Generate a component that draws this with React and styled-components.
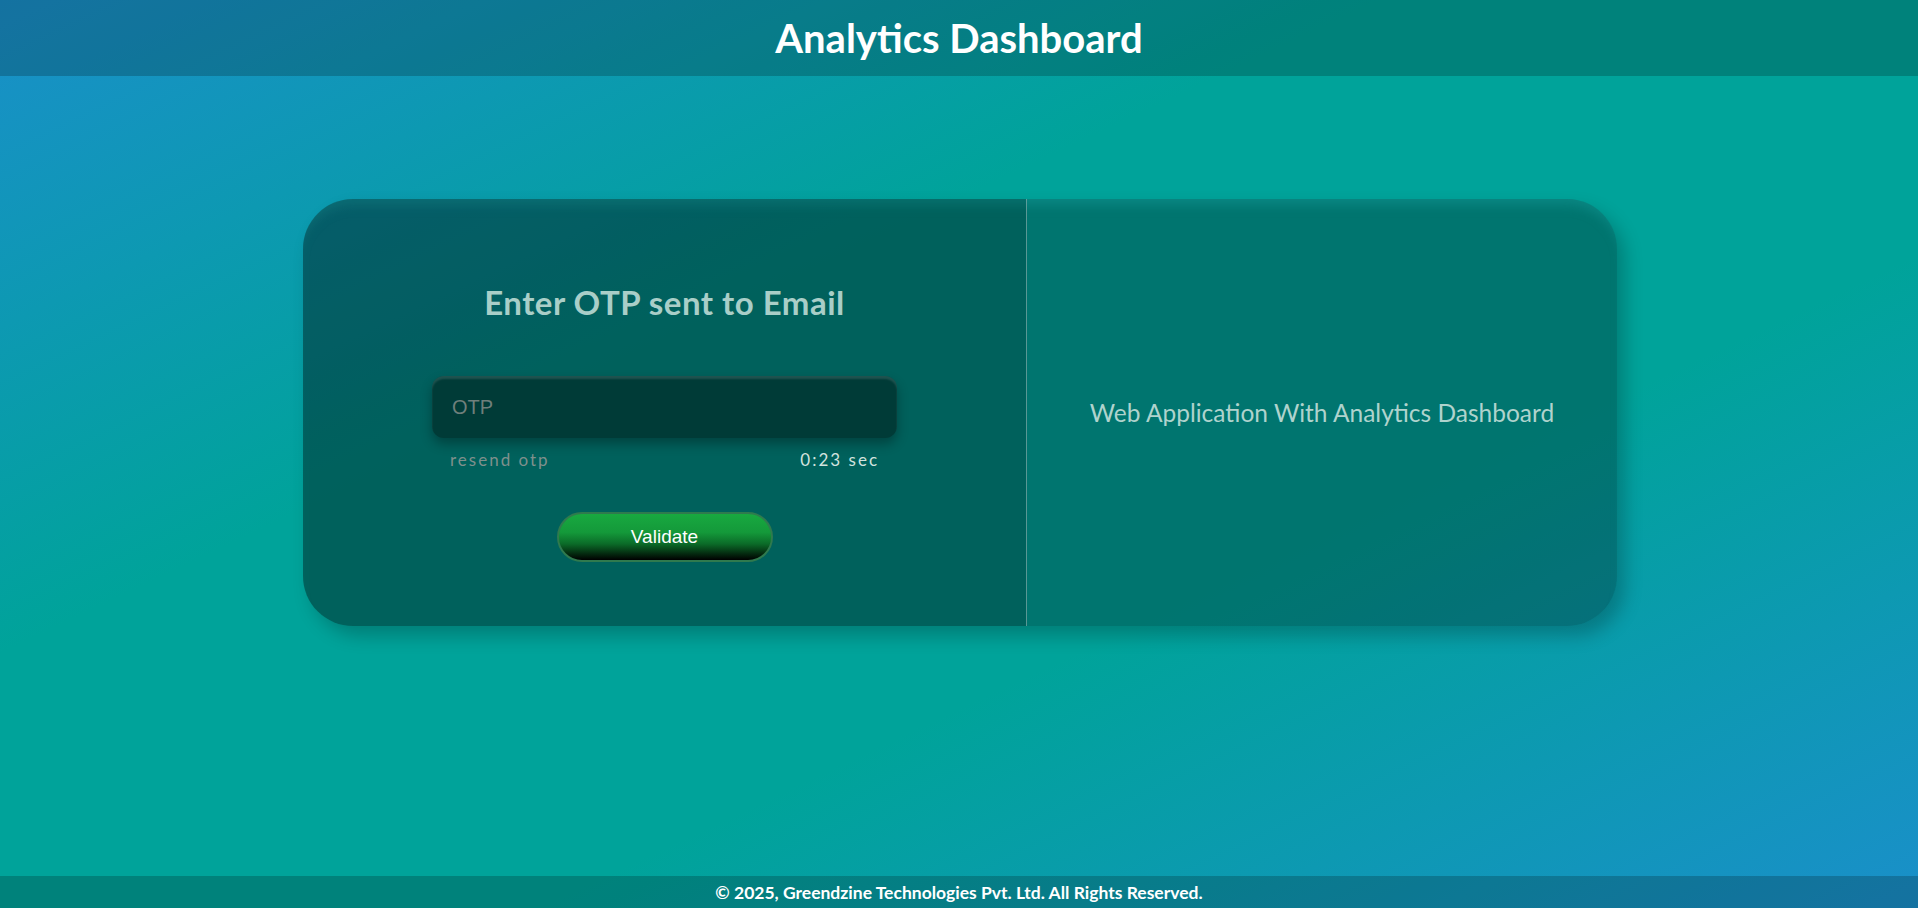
import React from "react";
import styled, { createGlobalStyle } from "styled-components";

const GlobalStyle = createGlobalStyle`
  html, body {
    margin: 0;
    padding: 0;
  }
  body {
    font-family: Lato, "Noto Sans", sans-serif;
  }
  * {
    box-sizing: border-box;
  }
`;

const Page = styled.div`
  display: flex;
  flex-direction: column;
  height: 100vh;
  background: linear-gradient(
    to bottom right,
    #1a8fca 0%,
    #00a39a 36%,
    #00a39a 64%,
    #1a8fca 100%
  );
`;

const Header = styled.header`
  height: 76px;
  display: flex;
  align-items: center;
  justify-content: center;
  background: rgba(0, 0, 0, 0.2);
`;

const Title = styled.h1`
  margin: 0;
  font-size: 40px;
  font-weight: 700;
  color: #ffffff;
`;

const Main = styled.main`
  flex: 1;
  display: flex;
  justify-content: center;
  align-items: flex-start;
  padding-top: 123px;
  padding-left: 2px;
`;

const Card = styled.section`
  width: 1314px;
  height: 427px;
  display: grid;
  grid-template-columns: 724px 1fr;
  border-radius: 50px;
  overflow: hidden;
  background: rgba(0, 0, 0, 0.28);
  box-shadow: 8px 10px 18px rgba(0, 0, 0, 0.22),
    inset 0 12px 12px -6px rgba(30, 170, 170, 0.35);
`;

const FormPane = styled.div`
  display: flex;
  flex-direction: column;
  align-items: center;
  padding-top: 84px;
  background: rgba(0, 0, 0, 0.17);
  border-right: 1px solid rgba(255, 255, 255, 0.35);
`;

const Heading = styled.h2`
  margin: 0;
  font-size: 33px;
  line-height: 38px;
  font-weight: 700;
  letter-spacing: 0.5px;
  color: #a9cec8;
`;

const OtpInput = styled.input`
  margin-top: 55px;
  width: 465px;
  height: 62px;
  padding: 0 20px;
  border: none;
  outline: none;
  border-radius: 12px;
  background: #003b37;
  font-family: "Liberation Sans", Arial, sans-serif;
  font-size: 20px;
  color: #cfe0dc;
  box-shadow: 0 6px 12px rgba(0, 0, 0, 0.3),
    inset 0 3px 2px rgba(255, 255, 255, 0.12);

  &::placeholder {
    color: #6f7f7b;
  }
`;

const MetaRow = styled.div`
  margin-top: 12px;
  width: 465px;
  padding: 0 18px;
  display: flex;
  justify-content: space-between;
  font-size: 17px;
  line-height: 20px;
  letter-spacing: 2px;
`;

const Meta = styled.span`
  color: ${(p) => (p.light ? "#d2e3df" : "#7f908c")};
`;

const ValidateButton = styled.button`
  margin-top: 42px;
  width: 216px;
  height: 50px;
  border-radius: 25px;
  border: 2px solid #2f7a4e;
  background: linear-gradient(
    to bottom,
    #18a940 0%,
    #14993a 40%,
    #0b6b28 65%,
    #000000 100%
  );
  color: #ffffff;
  font-family: "Liberation Sans", Arial, sans-serif;
  font-size: 19px;
  cursor: pointer;
`;

const InfoPane = styled.div`
  display: flex;
  align-items: center;
  justify-content: center;
`;

const InfoText = styled.p`
  margin: 0;
  font-size: 24.5px;
  color: #afd3cd;
`;

const Footer = styled.footer`
  height: 32px;
  display: flex;
  align-items: center;
  justify-content: center;
  background: rgba(0, 0, 0, 0.2);
  color: #ffffff;
  font-size: 17.5px;
  font-weight: 700;
`;

const App = () => {
  return (
    <Page>
      <GlobalStyle />
      <Header>
        <Title>Analytics Dashboard</Title>
      </Header>
      <Main>
        <Card>
          <FormPane>
            <Heading>Enter OTP sent to Email</Heading>
            <OtpInput type="text" placeholder="OTP" />
            <MetaRow>
              <Meta>resend otp</Meta>
              <Meta light>0:23 sec</Meta>
            </MetaRow>
            <ValidateButton>Validate</ValidateButton>
          </FormPane>
          <InfoPane>
            <InfoText>Web Application With Analytics Dashboard</InfoText>
          </InfoPane>
        </Card>
      </Main>
      <Footer>© 2025, Greendzine Technologies Pvt. Ltd. All Rights Reserved.</Footer>
    </Page>
  );
};

export default App;
